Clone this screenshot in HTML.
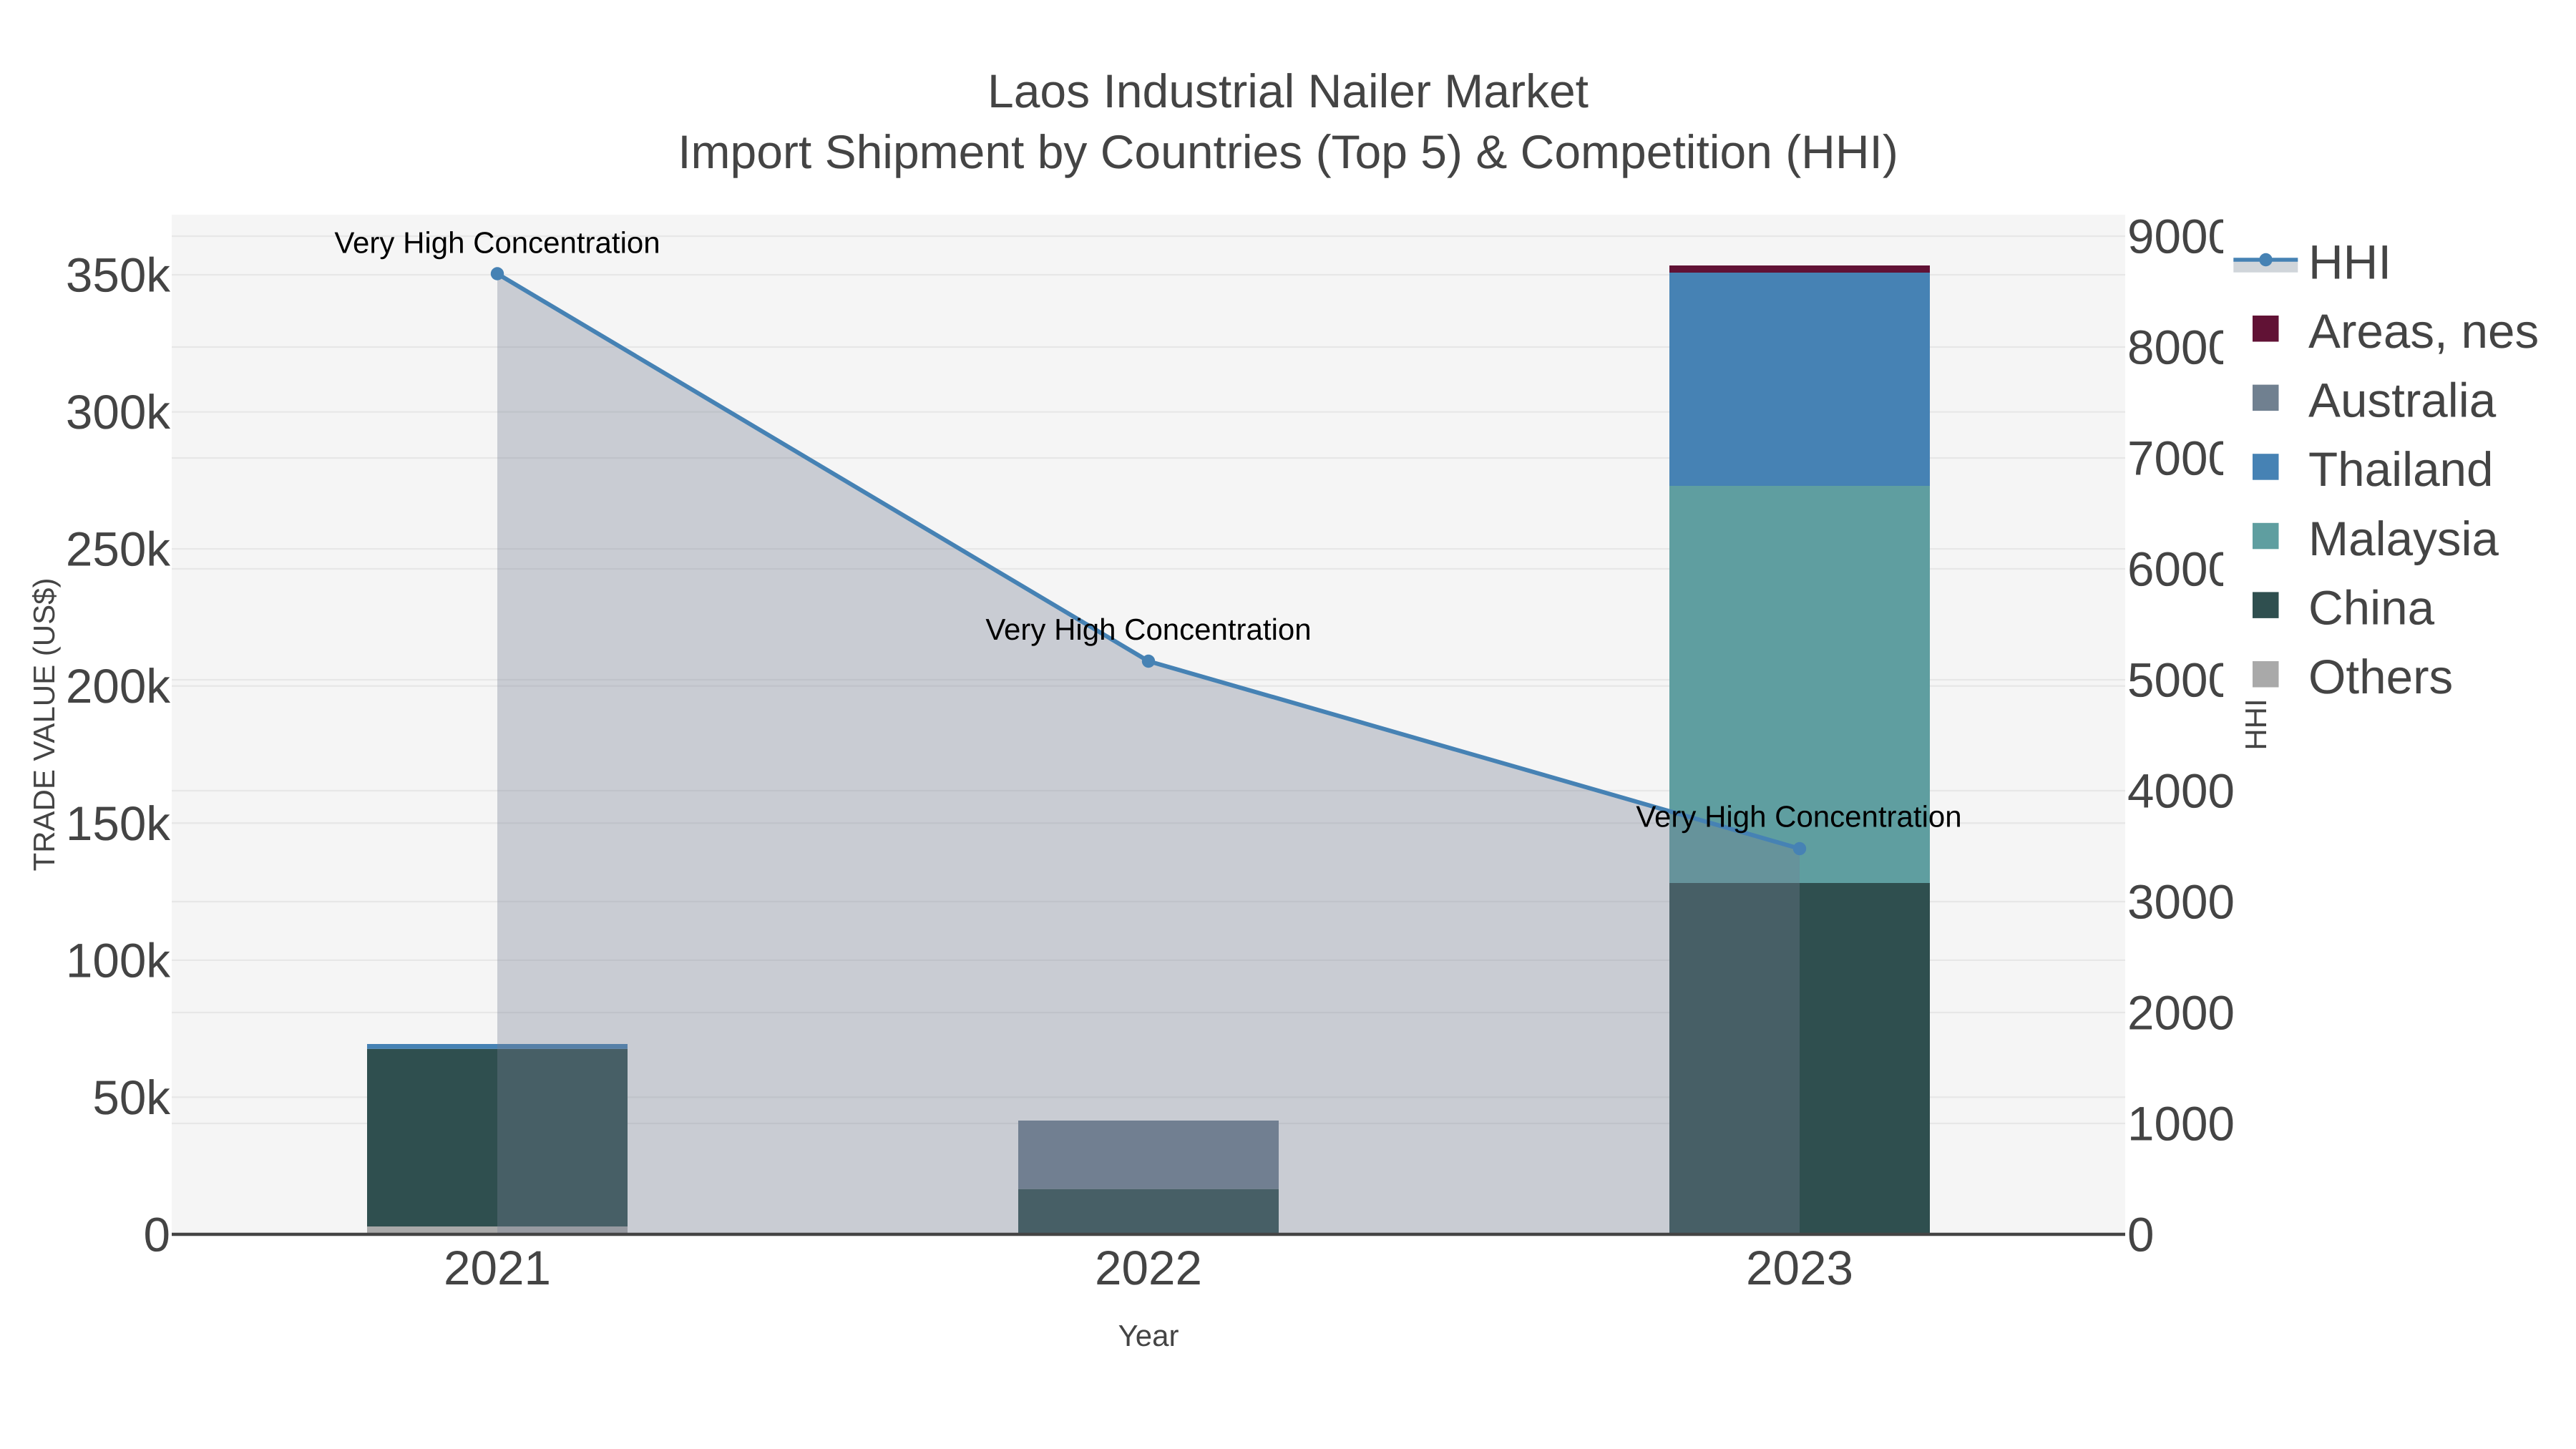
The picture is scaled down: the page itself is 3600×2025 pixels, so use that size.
<!DOCTYPE html>
<html lang="en">
<head>
<meta charset="utf-8">
<title>Laos Industrial Nailer Market</title>
<style>
html,body{margin:0;padding:0;background:#fff;width:3600px;height:2025px;overflow:hidden}
svg{display:block}
text{font-family:"Liberation Sans",Arial,sans-serif;fill:#444;text-rendering:geometricPrecision}
.t{font-size:67.4px}
.s{font-size:42px}
.h{font-size:66px}
.a{font-size:42px;fill:#000;text-anchor:middle}
.g line{stroke:#e7e7e7;stroke-width:2.3}
</style>
</head>
<body>
<svg width="3600" height="2025" viewBox="0 0 3600 2025" xmlns="http://www.w3.org/2000/svg">
<rect width="3600" height="2025" fill="#fff"/>
<rect x="240" y="300" width="2730" height="1425" fill="#f5f5f5"/>

<g class="g">
<line x1="240" x2="2970" y1="1533.4" y2="1533.4"/>
<line x1="240" x2="2970" y1="1341.9" y2="1341.9"/>
<line x1="240" x2="2970" y1="1150.3" y2="1150.3"/>
<line x1="240" x2="2970" y1="958.7" y2="958.7"/>
<line x1="240" x2="2970" y1="767.1" y2="767.1"/>
<line x1="240" x2="2970" y1="575.6" y2="575.6"/>
<line x1="240" x2="2970" y1="384" y2="384"/>
<line x1="240" x2="2970" y1="1570" y2="1570"/>
<line x1="240" x2="2970" y1="1415" y2="1415"/>
<line x1="240" x2="2970" y1="1260" y2="1260"/>
<line x1="240" x2="2970" y1="1105" y2="1105"/>
<line x1="240" x2="2970" y1="950" y2="950"/>
<line x1="240" x2="2970" y1="795" y2="795"/>
<line x1="240" x2="2970" y1="640" y2="640"/>
<line x1="240" x2="2970" y1="485" y2="485"/>
<line x1="240" x2="2970" y1="330" y2="330"/>
</g>

<!-- 2021 -->
<rect x="513" y="1714" width="364" height="11" fill="#a9a9a9"/>
<rect x="513" y="1465.8" width="364" height="248.2" fill="#2f4f4f"/>
<rect x="513" y="1459" width="364" height="6.8" fill="#4682b4"/>
<!-- 2022 -->
<rect x="1423" y="1661.7" width="364" height="63.3" fill="#2f4f4f"/>
<rect x="1423" y="1566" width="364" height="95.7" fill="#708090"/>
<!-- 2023 -->
<rect x="2333" y="1234" width="364" height="491" fill="#2f4f4f"/>
<rect x="2333" y="679" width="364" height="555" fill="#5f9ea0"/>
<rect x="2333" y="381" width="364" height="298" fill="#4682b4"/>
<rect x="2333" y="371" width="364" height="10" fill="#611235"/>

<!-- HHI area + line -->
<polygon points="695,382.5 1605,924 2515,1186 2515,1725 695,1725" fill="rgb(118,125,148)" fill-opacity="0.34"/>
<polyline points="695,382.5 1605,924 2515,1186" fill="none" stroke="#4682b4" stroke-width="6" stroke-linejoin="round"/>
<circle cx="695" cy="382.5" r="9.2" fill="#4682b4"/>
<circle cx="1605" cy="924" r="9.2" fill="#4682b4"/>
<circle cx="2515" cy="1186" r="9.2" fill="#4682b4"/>

<!-- x axis line -->
<line x1="240" x2="2970" y1="1725" y2="1725" stroke="#444" stroke-width="4.6"/>

<!-- annotations -->
<text class="a" x="695" y="353.6">Very High Concentration</text>
<text class="a" x="1605" y="894">Very High Concentration</text>
<text class="a" x="2514" y="1155.6">Very High Concentration</text>

<!-- title -->
<text class="h" x="1800" y="150" text-anchor="middle">Laos Industrial Nailer Market</text>
<text class="h" x="1800" y="235" text-anchor="middle">Import Shipment by Countries (Top 5) &amp; Competition (HHI)</text>

<!-- left ticks -->
<g class="t" text-anchor="end">
<text x="238" y="1748.5">0</text>
<text x="238" y="1557">50k</text>
<text x="238" y="1365.4">100k</text>
<text x="238" y="1173.8">150k</text>
<text x="238" y="982.2">200k</text>
<text x="238" y="790.6">250k</text>
<text x="238" y="599.1">300k</text>
<text x="238" y="407.5">350k</text>
</g>

<!-- right ticks -->
<g class="t">
<text x="2973" y="1748.5">0</text>
<text x="2973" y="1593.5">1000</text>
<text x="2973" y="1438.5">2000</text>
<text x="2973" y="1283.5">3000</text>
<text x="2973" y="1128.5">4000</text>
<text x="2973" y="973.5">5000</text>
<text x="2973" y="818.5">6000</text>
<text x="2973" y="663.5">7000</text>
<text x="2973" y="508.5">8000</text>
<text x="2973" y="353.5">9000</text>
</g>

<!-- x ticks -->
<g class="t" text-anchor="middle">
<text x="695" y="1795">2021</text>
<text x="1605" y="1795">2022</text>
<text x="2515" y="1795">2023</text>
</g>

<!-- axis titles -->
<text class="s" x="1605" y="1881" text-anchor="middle">Year</text>
<text class="s" text-anchor="middle" transform="translate(76 1012.5) rotate(-90)">TRADE VALUE (US$)</text>

<!-- legend background covers the right-axis labels -->
<rect x="3107" y="300" width="493" height="678" fill="#fff"/>
<text class="s" text-anchor="middle" transform="translate(3167 1012.5) rotate(-90)">HHI</text>

<!-- legend -->
<rect x="3121.3" y="363" width="90" height="17.7" fill="#708090" fill-opacity="0.33"/>
<line x1="3121.3" x2="3211.3" y1="363" y2="363" stroke="#4682b4" stroke-width="5.5"/>
<circle cx="3166.5" cy="363" r="9.2" fill="#4682b4"/>
<rect x="3148" y="441" width="36.5" height="36.5" fill="#611235"/>
<rect x="3148" y="537.6" width="36.5" height="36.5" fill="#708090"/>
<rect x="3148" y="634.2" width="36.5" height="36.5" fill="#4682b4"/>
<rect x="3148" y="730.8" width="36.5" height="36.5" fill="#5f9ea0"/>
<rect x="3148" y="827.4" width="36.5" height="36.5" fill="#2f4f4f"/>
<rect x="3148" y="924" width="36.5" height="36.5" fill="#a9a9a9"/>
<g class="t">
<text x="3226" y="389.5">HHI</text>
<text x="3226" y="486">Areas, nes</text>
<text x="3226" y="582.6">Australia</text>
<text x="3226" y="679.2">Thailand</text>
<text x="3226" y="775.8">Malaysia</text>
<text x="3226" y="872.4">China</text>
<text x="3226" y="969">Others</text>
</g>
</svg>
</body>
</html>
